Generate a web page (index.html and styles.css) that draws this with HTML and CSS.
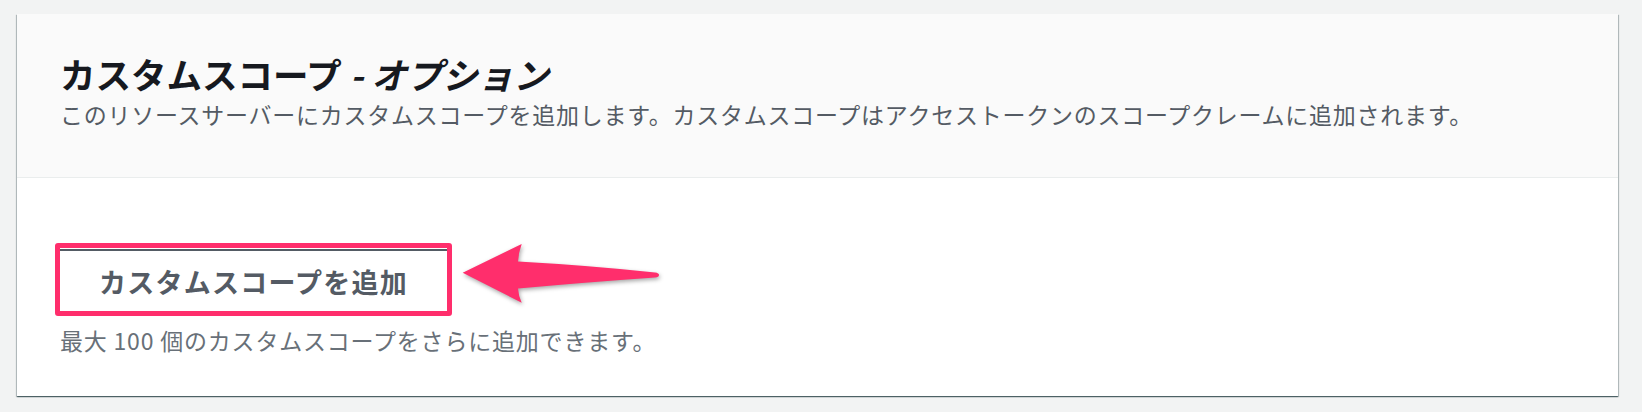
FILE: index.html
```html
<!DOCTYPE html>
<html lang="ja">
<head>
<meta charset="utf-8">
<link rel="stylesheet" href="styles.css">
</head>
<body>
<div class="page">
  <section class="card">
    <header class="card-header">
      <h2 class="title">カスタムスコープ <i class="opt">- オプション</i></h2>
      <p class="desc">このリソースサーバーにカスタムスコープを追加します。カスタムスコープはアクセストークンのスコープクレームに追加されます。</p>
    </header>
    <div class="card-body">
      <div class="highlight">
        <button class="btn">カスタムスコープを追加</button>
      </div>
      <p class="hint">最大 100 個のカスタムスコープをさらに追加できます。</p>
    </div>
  </section>
  <svg class="arrow" width="220" height="80" viewBox="450 235 220 80">
    <path d="M462.7 272.7 L521.7 244 Q518.5 253 518 261.5 Q590 265.5 655 272.5 Q659 273 659 275 Q659 277 655 277.5 Q590 282 518 288.5 Q518.5 296 521.7 302.7 Z" fill="#ff2e6c"/>
  </svg>
</div>
</body>
</html>
```
FILE: styles.css
```css
html, body {
  margin: 0;
  padding: 0;
  background: #f2f3f3;
}
body {
  font-family: "Noto Sans CJK JP", "Noto Sans", sans-serif;
}
.page {
  position: relative;
  padding: 14px 24px 19px 17px;
}
.card {
  background: #ffffff;
  box-shadow: 0 1px 1px 0 rgba(0, 28, 36, 0.5), 1px 1px 1px 0 rgba(0, 28, 36, 0.2), -1px 1px 1px 0 rgba(0, 28, 36, 0.2);
}
.card-header {
  background: #fafafa;
  border-bottom: 1px solid #eaeded;
  padding: 37px 43px 47px;
}
.title {
  margin: 0;
  font-size: 35.5px;
  line-height: 46px;
  font-weight: 700;
  color: #16191f;
}
.opt {
  font-style: italic;
}
.desc {
  margin: 1px 0 0;
  font-size: 23px;
  line-height: 32px;
  letter-spacing: 0.75px;
  color: #545b64;
}
.card-body {
  padding: 65px 38px 40px;
}
.highlight {
  display: inline-block;
  border: 5px solid #ff2e6c;
  border-radius: 3px;
  padding: 1px 0 0;
}
.btn {
  display: block;
  width: 387px;
  height: 62px;
  margin: 0;
  padding: 0;
  background: #ffffff;
  border: none;
  border-top: 2px solid #545b64;
  font-family: "Noto Sans CJK JP", "Noto Sans", sans-serif;
  font-size: 27px;
  font-weight: 700;
  letter-spacing: 1.25px;
  color: #545b64;
}
.hint {
  margin: 8px 0 0 5px;
  font-size: 23px;
  line-height: 32px;
  letter-spacing: 0.8px;
  color: #687078;
}
.arrow {
  position: absolute;
  left: 450px;
  top: 235px;
  filter: drop-shadow(1px 2px 2px rgba(0, 0, 0, 0.35));
}
```
